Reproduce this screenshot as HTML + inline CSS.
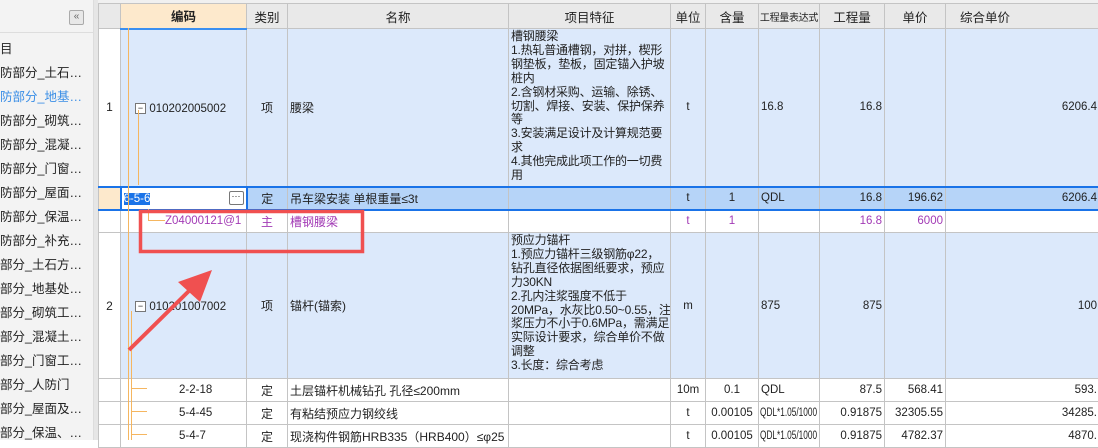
<!DOCTYPE html>
<html><head><meta charset="utf-8"><style>
*{margin:0;padding:0;box-sizing:border-box}
body{width:1098px;height:440px;overflow:hidden;background:#fff;font-family:"Liberation Sans","Noto Sans CJK SC",sans-serif;font-size:12px;color:#222;position:relative}
#left{position:absolute;left:0;top:0;width:94px;height:440px;background:#f3f3f3;border-right:1px solid #ddd}
#gap{position:absolute;left:94px;top:0;width:4px;height:440px;background:#e6e6e6}
.li{position:absolute;left:0;font-size:12.5px;white-space:nowrap;color:#222}
#btn{position:absolute;left:69px;top:10px;width:15px;height:15px;border:1px solid #aaa;border-radius:2px;background:#e8e8e8;font-size:10px;color:#666;text-align:center;line-height:12px}
table{position:absolute;left:98px;top:3px;width:1001px;border-collapse:collapse;table-layout:fixed;font-size:12px}
td,th{border:1px solid #c4c4c4;overflow:hidden;white-space:nowrap;padding:0 2px;font-weight:normal}
th{background:#e9e9e9;height:25px;font-size:12.5px;padding:0}
th.code{background:#fde9cc;border-bottom:2px solid #3b8ff0;font-weight:bold}
.b td{background:#dce9fb}
.sel td{background:#b6d4f8;border-top:2px solid #1a73e8;border-bottom:2px solid #1a73e8}
.p td{color:#a23ab5}
.c{text-align:center}.r{text-align:right}
.mono{font-family:"Liberation Sans","Noto Sans CJK SC",sans-serif;font-size:11.5px}
.ex{padding:0 1px}
.ex span{display:inline-block;transform:scaleX(0.72);transform-origin:left center}
.feat{line-height:13.9px;vertical-align:top;padding:1px 0 0 2px;font-size:12px;letter-spacing:-0.2px}
.num td:first-child{background:#fff}
</style></head><body>
<div id="left">
<div id="btn">«</div>
<div style="position:absolute;left:0;top:32px;width:94px;height:1px;background:#ddd"></div>
<div class="li" style="top:38px">目</div>
<div class="li" style="top:62px">防部分_土石…</div>
<div class="li" style="top:86px;color:#3a8ee6">防部分_地基…</div>
<div class="li" style="top:110px">防部分_砌筑…</div>
<div class="li" style="top:134px">防部分_混凝…</div>
<div class="li" style="top:158px">防部分_门窗…</div>
<div class="li" style="top:182px">防部分_屋面…</div>
<div class="li" style="top:206px">防部分_保温…</div>
<div class="li" style="top:230px">防部分_补充…</div>
<div class="li" style="top:254px">部分_土石方…</div>
<div class="li" style="top:278px">部分_地基处…</div>
<div class="li" style="top:302px">部分_砌筑工…</div>
<div class="li" style="top:326px">部分_混凝土…</div>
<div class="li" style="top:350px">部分_门窗工…</div>
<div class="li" style="top:374px">部分_人防门</div>
<div class="li" style="top:398px">部分_屋面及…</div>
<div class="li" style="top:422px">部分_保温、…</div>
</div>
<div id="gap"></div>
<div style="position:absolute;left:98px;top:0;width:1000px;height:3px;background:#f0f0f0"></div>
<table>
<colgroup><col style="width:22px"><col style="width:126px"><col style="width:41px"><col style="width:221px"><col style="width:162px"><col style="width:35px"><col style="width:53px"><col style="width:61px"><col style="width:65px"><col style="width:61px"><col style="width:154px"></colgroup>
<tr><th></th><th class="code">编码</th><th>类别</th><th>名称</th><th>项目特征</th><th>单位</th><th>含量</th><th style="font-size:10px;letter-spacing:-0.3px">工程量表达式</th><th>工程量</th><th>单价</th><th style="text-align:left;padding-left:14px">综合单价</th></tr>
<tr class="b num" style="height:158px"><td class="c">1</td><td style="padding-left:14px"><span style="display:inline-block;width:11px;height:11px;border:1px solid #777;background:#fff;font-size:9px;line-height:8px;text-align:center;vertical-align:middle">−</span> <span class="mono">010202005002</span></td><td class="c">项</td><td>腰梁</td><td class="feat">槽钢腰梁<br>1.热轧普通槽钢，对拼，楔形<br>钢垫板，垫板，固定锚入护坡<br>桩内<br>2.含钢材采购、运输、除锈、<br>切割、焊接、安装、保护保养<br>等<br>3.安装满足设计及计算规范要<br>求<br>4.其他完成此项工作的一切费<br>用</td><td class="c mono">t</td><td></td><td class="mono">16.8</td><td class="r mono">16.8</td><td></td><td class="r mono">6206.4</td></tr>
<tr class="sel" style="height:23px"><td style="background:#fde9cc"></td><td style="background:#fff;border:2px solid #1a73e8"><span class="mono" style="background:#1a73e8;color:#fff">6-5-6</span><span style="float:right;width:15px;height:14px;border:1px solid #777;border-radius:2px;font-size:9px;line-height:8px;text-align:center;background:#fff">···</span></td><td class="c">定</td><td>吊车梁安装 单根重量≤3t</td><td></td><td class="c mono">t</td><td class="c mono">1</td><td class="mono">QDL</td><td class="r mono">16.8</td><td class="r mono">196.62</td><td class="r mono">6206.4</td></tr>
<tr class="p" style="height:23px"><td></td><td style="padding-left:44px" class="mono">Z04000121@1</td><td class="c">主</td><td>槽钢腰梁</td><td></td><td class="c mono">t</td><td class="c mono">1</td><td></td><td class="r mono">16.8</td><td class="r mono">6000</td><td></td></tr>
<tr class="b num" style="height:146px"><td class="c">2</td><td style="padding-left:14px"><span style="display:inline-block;width:11px;height:11px;border:1px solid #777;background:#fff;font-size:9px;line-height:8px;text-align:center;vertical-align:middle">−</span> <span class="mono">010201007002</span></td><td class="c">项</td><td>锚杆(锚索)</td><td class="feat">预应力锚杆<br>1.预应力锚杆三级钢筋φ22，<br>钻孔直径依据图纸要求，预应<br>力30KN<br>2.孔内注浆强度不低于<br>20MPa，水灰比0.50~0.55，注<br>浆压力不小于0.6MPa，需满足<br>实际设计要求，综合单价不做<br>调整<br>3.长度：综合考虑</td><td class="c mono">m</td><td></td><td class="mono">875</td><td class="r mono">875</td><td></td><td class="r mono">100</td></tr>
<tr style="height:23px"><td></td><td style="padding-left:58px" class="mono">2-2-18</td><td class="c">定</td><td>土层锚杆机械钻孔 孔径≤200mm</td><td></td><td class="c mono">10m</td><td class="c mono">0.1</td><td class="mono">QDL</td><td class="r mono">87.5</td><td class="r mono">568.41</td><td class="r mono">593.</td></tr>
<tr style="height:23px"><td></td><td style="padding-left:58px" class="mono">5-4-45</td><td class="c">定</td><td>有粘结预应力钢绞线</td><td></td><td class="c mono">t</td><td class="c mono">0.00105</td><td class="mono ex"><span>QDL*1.05/1000</span></td><td class="r mono">0.91875</td><td class="r mono">32305.55</td><td class="r mono">34285.</td></tr>
<tr style="height:23px"><td></td><td style="padding-left:58px" class="mono">5-4-7</td><td class="c">定</td><td>现浇构件钢筋HRB335（HRB400）≤φ25</td><td></td><td class="c mono">t</td><td class="c mono">0.00105</td><td class="mono ex"><span>QDL*1.05/1000</span></td><td class="r mono">0.91875</td><td class="r mono">4782.37</td><td class="r mono">4870.</td></tr>
</table>
<svg style="position:absolute;left:0;top:0" width="1098" height="440">
<g stroke="#f5b660" stroke-width="1" fill="none">
<line x1="128.5" y1="28" x2="128.5" y2="440"/>
<line x1="138.5" y1="110" x2="138.5" y2="185"/>
<line x1="148.5" y1="209" x2="148.5" y2="220"/><line x1="148" y1="220.5" x2="165" y2="220.5"/>
<line x1="131.5" y1="311" x2="131.5" y2="440"/>
<line x1="131" y1="388.5" x2="147" y2="388.5"/><line x1="131" y1="411.5" x2="147" y2="411.5"/><line x1="131" y1="434.5" x2="147" y2="434.5"/>
</g>
<rect x="140.5" y="211.5" width="222" height="40" fill="none" stroke="#f05050" stroke-width="3.5"/>
<line x1="129" y1="350" x2="196" y2="284" stroke="#f05050" stroke-width="4"/>
<polygon points="212,270 178,282 200,302" fill="#f05050"/>
</svg>
</body></html>
